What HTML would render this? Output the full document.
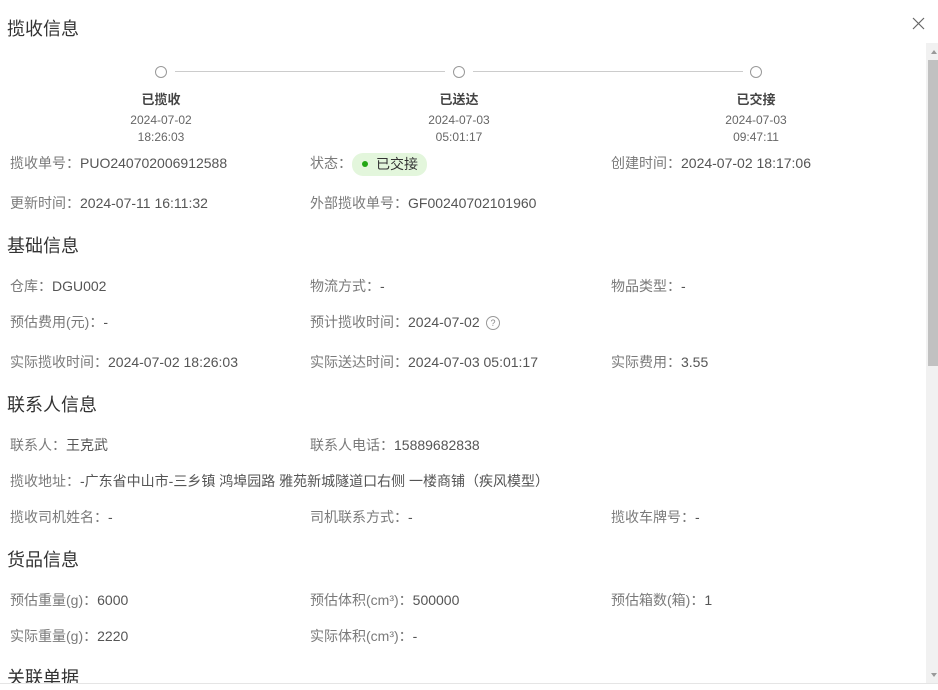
<!DOCTYPE html>
<html><head><meta charset="utf-8"><style>
body{margin:0;width:938px;height:687px;overflow:hidden;background:#fff;font-family:"Liberation Sans","Noto Sans CJK SC",sans-serif;position:relative}
.a{position:absolute;white-space:nowrap}
.h{font-size:18px;color:#333;left:7px;line-height:24px}
.r{font-size:14px;line-height:18px;color:#555}
.r .l{color:#7a7a7a}
.st{text-align:center;width:120px;font-size:12px;color:#666;line-height:17px}
.st b{display:block;font-size:13px;color:#444;margin-bottom:4px}
.c{position:absolute;width:10px;height:10px;border:1px solid #999;border-radius:50%;top:66px;background:#fff}
</style></head><body>
<div class="a h" style="top:17px">揽收信息</div>
<svg class="a" style="left:912px;top:17px" width="13" height="13" viewBox="0 0 13 13"><path d="M1 1L12 12M12 1L1 12" stroke="#666" stroke-width="1.2"/></svg>
<div class="a" style="left:926px;top:43px;width:12px;height:640px;background:#f1f1f1"></div>
<div class="a" style="left:928px;top:60px;width:10px;height:306px;background:#c1c1c1"></div>
<div class="a" style="left:931px;top:50px;width:0;height:0;border-left:3px solid transparent;border-right:3px solid transparent;border-bottom:4px solid #999"></div>
<div class="a" style="left:931px;top:673px;width:0;height:0;border-left:3px solid transparent;border-right:3px solid transparent;border-top:4px solid #999"></div>

<div class="a" style="left:175px;top:71px;width:270px;height:1px;background:#ccc"></div>
<div class="a" style="left:473px;top:71px;width:270px;height:1px;background:#ccc"></div>
<div class="c" style="left:155px"></div><div class="c" style="left:453px"></div><div class="c" style="left:750px"></div>
<div class="a st" style="left:101px;top:91px"><b>已揽收</b>2024-07-02<br>18:26:03</div>
<div class="a st" style="left:399px;top:91px"><b>已送达</b>2024-07-03<br>05:01:17</div>
<div class="a st" style="left:696px;top:91px"><b>已交接</b>2024-07-03<br>09:47:11</div>

<div class="a r" style="left:10px;top:154px"><span class="l">揽收单号：</span>PUO240702006912588</div>
<div class="a r" style="left:310px;top:154px"><span class="l">状态：</span></div>
<div class="a" style="left:352px;top:153px;width:75px;height:23px;border-radius:11px;background:#e3f6dc"></div>
<div class="a" style="left:362px;top:161px;width:6px;height:6px;border-radius:50%;background:#23a614"></div>
<div class="a r" style="left:376px;top:155px;color:#333">已交接</div>
<div class="a r" style="left:611px;top:154px"><span class="l">创建时间：</span>2024-07-02 18:17:06</div>
<div class="a r" style="left:10px;top:194px"><span class="l">更新时间：</span>2024-07-11 16:11:32</div>
<div class="a r" style="left:310px;top:194px"><span class="l">外部揽收单号：</span>GF00240702101960</div>

<div class="a h" style="top:234px">基础信息</div>
<div class="a r" style="left:10px;top:277px"><span class="l">仓库：</span>DGU002</div>
<div class="a r" style="left:310px;top:277px"><span class="l">物流方式：</span>-</div>
<div class="a r" style="left:611px;top:277px"><span class="l">物品类型：</span>-</div>
<div class="a r" style="left:10px;top:313px"><span class="l">预估费用(元)：</span>-</div>
<div class="a r" style="left:310px;top:313px"><span class="l">预计揽收时间：</span>2024-07-02</div>
<div class="a" style="left:486px;top:316px;width:12px;height:12px;border:1px solid #999;border-radius:50%;font-size:9px;line-height:12px;text-align:center;color:#888">?</div>
<div class="a r" style="left:10px;top:353px"><span class="l">实际揽收时间：</span>2024-07-02 18:26:03</div>
<div class="a r" style="left:310px;top:353px"><span class="l">实际送达时间：</span>2024-07-03 05:01:17</div>
<div class="a r" style="left:611px;top:353px"><span class="l">实际费用：</span>3.55</div>

<div class="a h" style="top:393px">联系人信息</div>
<div class="a r" style="left:10px;top:436px"><span class="l">联系人：</span>王克武</div>
<div class="a r" style="left:310px;top:436px"><span class="l">联系人电话：</span>15889682838</div>
<div class="a r" style="left:10px;top:472px"><span class="l">揽收地址：</span>-广东省中山市-三乡镇 鸿埠园路 雅苑新城隧道口右侧 一楼商铺（疾风模型）</div>
<div class="a r" style="left:10px;top:508px"><span class="l">揽收司机姓名：</span>-</div>
<div class="a r" style="left:310px;top:508px"><span class="l">司机联系方式：</span>-</div>
<div class="a r" style="left:611px;top:508px"><span class="l">揽收车牌号：</span>-</div>

<div class="a h" style="top:548px">货品信息</div>
<div class="a r" style="left:10px;top:591px"><span class="l">预估重量(g)：</span>6000</div>
<div class="a r" style="left:310px;top:591px"><span class="l">预估体积(cm³)：</span>500000</div>
<div class="a r" style="left:611px;top:591px"><span class="l">预估箱数(箱)：</span>1</div>
<div class="a r" style="left:10px;top:627px"><span class="l">实际重量(g)：</span>2220</div>
<div class="a r" style="left:310px;top:627px"><span class="l">实际体积(cm³)：</span>-</div>

<div class="a h" style="top:666px">关联单据</div>
<div class="a" style="left:0;top:683px;width:938px;height:4px;background:#fff;border-top:1px solid #e5e5e5"></div>
</body></html>
